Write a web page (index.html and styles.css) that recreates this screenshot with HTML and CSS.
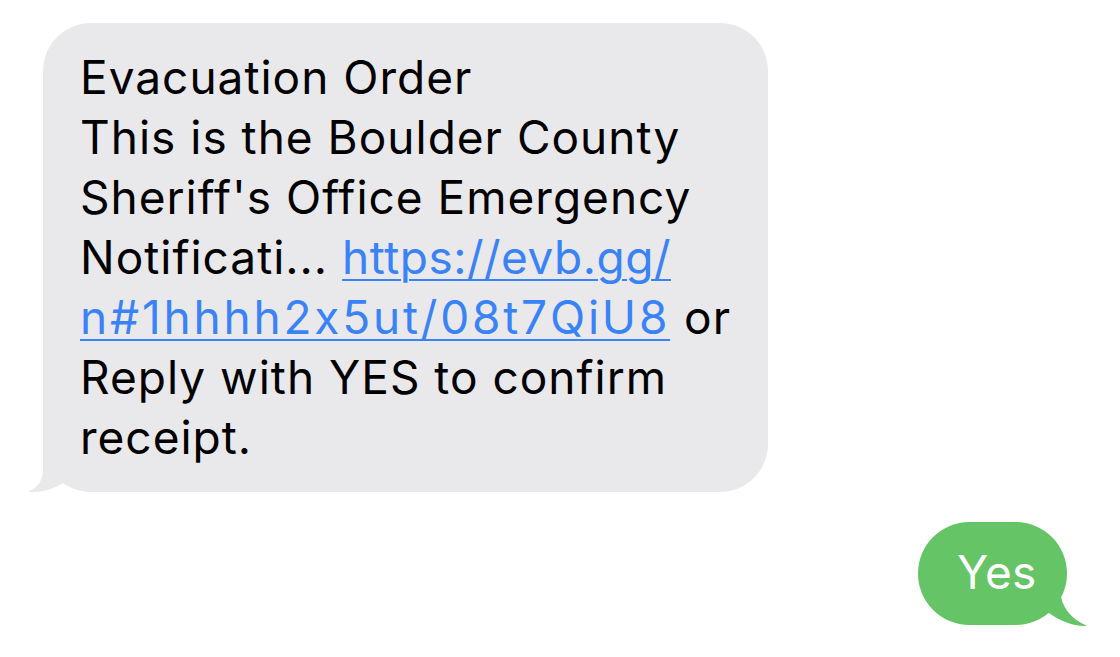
FILE: index.html
```html
<!DOCTYPE html>
<html>
<head>
<meta charset="utf-8">
<link rel="stylesheet" href="styles.css">
</head>
<body>
<div class="thread">
  <div class="bubble bubble-in">
    <svg class="tail tail-in" width="80" height="60" viewBox="23 432 80 60"><path d="M43,430 L43,470 C43,481 37,488 28,492 C40,493 52,490 63,483 L90,470 L90,430 Z" fill="#e9e9eb"/></svg>
    <p class="msg">Evacuation Order<br>This is the Boulder County<br>Sheriff's Office Emergency<br>Notificati... <a class="link" href="#"><span class="link-a">https://evb.gg/</span><br><span class="link-b">n#1hhhh2x5ut/08t7QiU8</span></a> or<br>Reply with YES to confirm<br>receipt.</p>
  </div>
  <div class="bubble bubble-out">
    <svg class="tail tail-out" width="80" height="62" viewBox="1017 565 80 62"><path d="M1058,580 L1061,597 C1064,611 1074,620 1087,626 C1075,627 1060,621 1049,613 L1030,600 Z" fill="#65c466"/></svg>
    <p class="msg msg-yes">Yes</p>
  </div>
</div>
</body>
</html>
```
FILE: styles.css
```css
html, body {
  margin: 0;
  padding: 0;
  background: #ffffff;
}
body {
  width: 1120px;
  height: 657px;
  overflow: hidden;
  font-family: "Inter", "Liberation Sans", sans-serif;
}
.thread {
  display: flex;
  flex-direction: column;
  padding-top: 23px;
}
.bubble {
  position: relative;
  border-radius: 48px;
}
.bubble-in {
  align-self: flex-start;
  margin-left: 43px;
  width: 725px;
  height: 469px;
  box-sizing: border-box;
  padding: 24px 0 0 37px;
  background: #e9e9eb;
  color: #000;
}
.bubble-out {
  align-self: flex-end;
  margin-right: 53px;
  margin-top: 30px;
  width: 149px;
  height: 103px;
  box-sizing: border-box;
  padding: 20px 0 0 39px;
  background: #65c466;
  color: #fff;
  border-radius: 52px;
}
.msg {
  position: relative;
  margin: 0;
  font-size: 46px;
  line-height: 60px;
  letter-spacing: 1px;
  white-space: nowrap;
}
.msg-yes {
  letter-spacing: 0.2px;
}
.link {
  color: #3a82f7;
  text-decoration: underline;
  text-decoration-thickness: 2px;
  text-underline-offset: 5px;
}
.link-a {
  letter-spacing: 0.5px;
}
.link-b {
  letter-spacing: 2.8px;
}
.tail {
  position: absolute;
  display: block;
}
.tail-in {
  left: -20px;
  bottom: 0;
}
.tail-out {
  right: -30px;
  bottom: -2px;
}
```
